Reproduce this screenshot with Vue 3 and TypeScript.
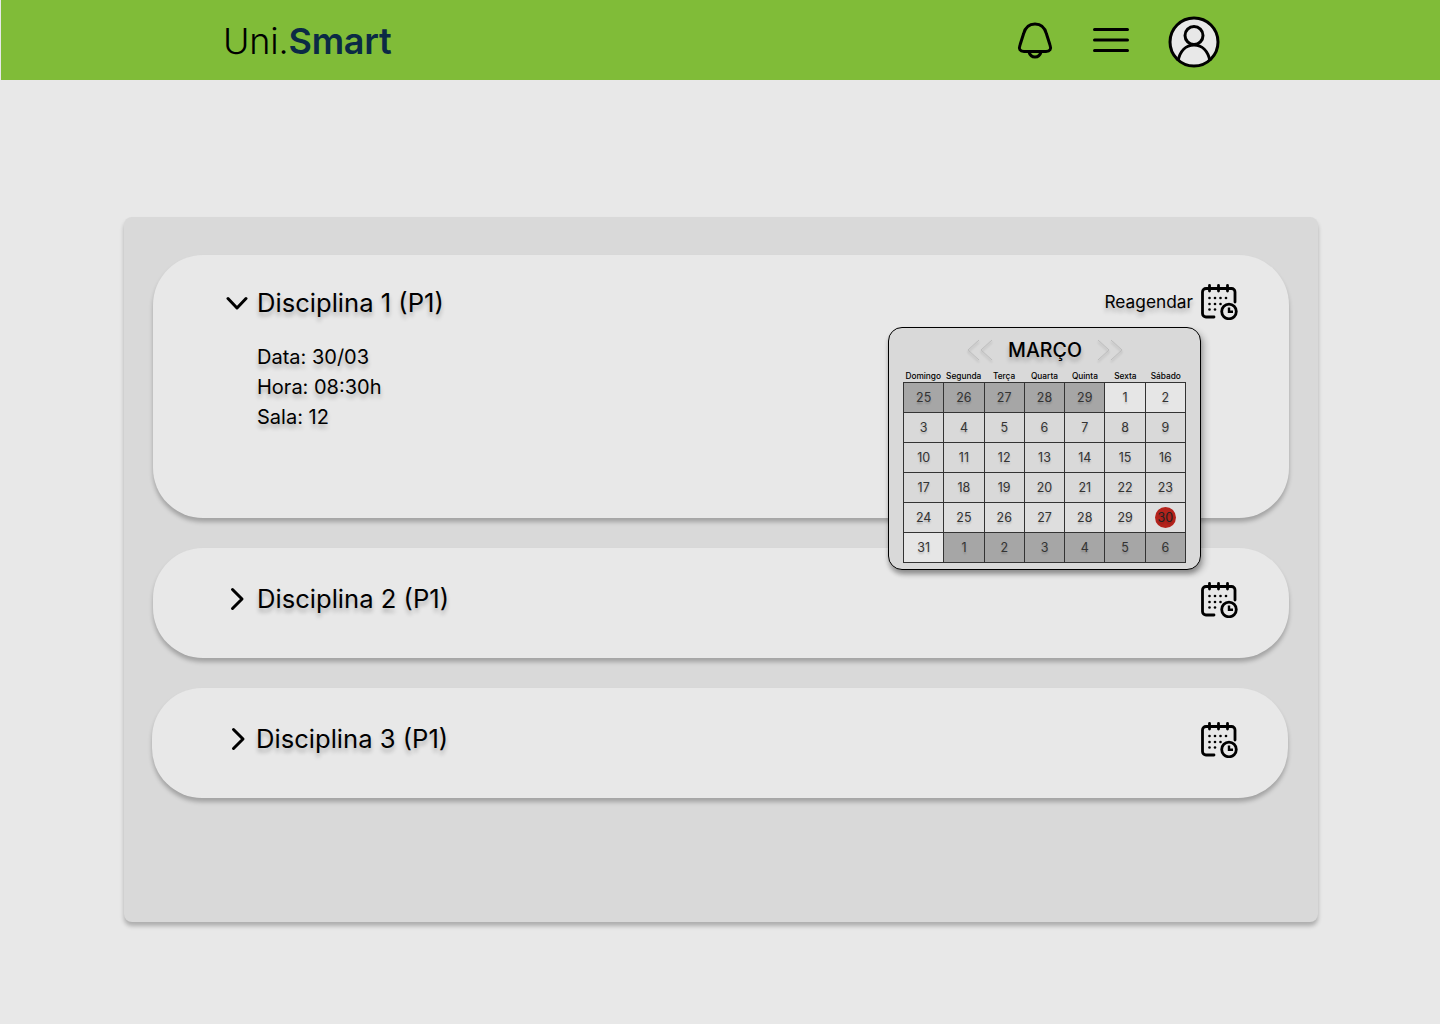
<script setup lang="ts">
interface Cell { d: number; muted?: boolean; light?: boolean; pale?: boolean; today?: boolean }
const weekdays = ['Domingo', 'Segunda', 'Terça', 'Quarta', 'Quinta', 'Sexta', 'Sábado']
const cells: Cell[] = [
  ...[25, 26, 27, 28, 29].map((d) => ({ d, muted: true })),
  { d: 1, pale: true }, { d: 2, pale: true },
  ...Array.from({ length: 21 }, (_, i) => ({ d: i + 3 })),
  ...[24, 25, 26, 27, 28, 29].map((d) => ({ d, light: true })),
  { d: 30, light: true, today: true },
  { d: 31, pale: true },
  ...[1, 2, 3, 4, 5, 6].map((d) => ({ d, muted: true })),
]
const dots = [
  [8.5, 14], [14, 14], [19.5, 14], [25, 14],
  [8.5, 20], [14, 20], [19.5, 20],
  [8.5, 25.5], [14, 25.5],
]
const ticks = [8.5, 17.5, 26.5]
</script>

<template>
  <div class="page">
    <header class="topbar">
      <div class="logo">Uni.<b>Smart</b></div>
      <svg class="bell" width="36" height="38" viewBox="0 0 36 38" fill="none" stroke="#000" stroke-width="3" stroke-linejoin="round" stroke-linecap="round">
        <path d="M18 2C10 2 7.500 8 6.500 12L3 23C1.500 27 3 29.500 7 29.500H29C33 29.500 34.500 27 33 23L29.500 12C28.500 8 26 2 18 2Z" />
        <path d="M12 30C13 33.500 15.500 35 18 35S23 33.500 24 30" />
      </svg>
      <svg class="menu" width="36" height="26" viewBox="0 0 36 26" stroke="#000" stroke-width="3" stroke-linecap="round">
        <path d="M1.5 2.5H34.5M1.5 13H34.5M1.5 23.5H34.5" />
      </svg>
      <svg class="user" width="52" height="52" viewBox="0 0 52 52" fill="none" stroke="#000" stroke-width="3">
        <circle cx="26" cy="26" r="24" fill="#e8e8e8" />
        <circle cx="26" cy="19.5" r="9" />
        <path d="M10 45C12 35 18 29 26 29S40 35 42 45" />
      </svg>
    </header>

    <main class="panel">
      <section class="card open">
        <div class="row">
          <svg class="chev" width="22" height="16" viewBox="0 0 22 16" fill="none" stroke="#000" stroke-width="3" stroke-linecap="round" stroke-linejoin="round">
            <path d="M2 3.5 11 13 20 3.5" />
          </svg>
          <h2>Disciplina 1 (P1)</h2>
          <span class="again">Reagendar</span>
          <svg class="cal" width="37" height="36" viewBox="0 0 37 36" fill="none">
            <path d="M13 33H5A3.500 3.500 0 0 1 1.500 29.500V8A3.500 3.500 0 0 1 5 4.500H30.500A3.500 3.500 0 0 1 34 8V18" stroke="#000" stroke-width="2.800" stroke-linecap="round" />
            <path v-for="t in ticks" :key="t" :d="`M${t} 1.500V7`" stroke="#000" stroke-width="2.800" stroke-linecap="round" />
            <circle v-for="p in dots" :key="p.join()" :cx="p[0]" :cy="p[1]" r="1.300" fill="#000" />
            <circle cx="28" cy="27.500" r="7.300" fill="#e8e8e8" stroke="#000" stroke-width="2.800" />
            <path d="M28 23.500V27.800H32" stroke="#000" stroke-width="2.400" />
          </svg>
        </div>
        <div class="details">
          <p>Data: 30/03</p>
          <p>Hora: 08:30h</p>
          <p>Sala: 12</p>
        </div>

        <div class="calendar">
          <div class="cal-head">
            <svg class="arrow" width="26" height="22" viewBox="0 0 26 22" fill="none" stroke="#bdbdbd" stroke-width="1">
              <path d="M12 1 1 11 12 21M25 1 14 11 25 21" />
            </svg>
            <span class="month">MARÇO</span>
            <svg class="arrow" width="26" height="22" viewBox="0 0 26 22" fill="none" stroke="#bdbdbd" stroke-width="1">
              <path d="M1 1 12 11 1 21M14 1 25 11 14 21" />
            </svg>
          </div>
          <div class="weekdays">
            <span v-for="w in weekdays" :key="w">{{ w }}</span>
          </div>
          <div class="grid">
            <div v-for="(c, i) in cells" :key="i" class="day" :class="{ muted: c.muted, light: c.light, pale: c.pale }">
              <span :class="{ today: c.today }">{{ c.d }}</span>
            </div>
          </div>
        </div>
      </section>

      <section class="card closed">
        <div class="row">
          <svg class="chev right" width="16" height="24" viewBox="0 0 16 24" fill="none" stroke="#000" stroke-width="3" stroke-linecap="round" stroke-linejoin="round">
            <path d="M3.500 2.500 13 12 3.500 21.500" />
          </svg>
          <h2>Disciplina 2 (P1)</h2>
          <svg class="cal push" width="37" height="36" viewBox="0 0 37 36" fill="none">
            <path d="M13 33H5A3.500 3.500 0 0 1 1.500 29.500V8A3.500 3.500 0 0 1 5 4.500H30.500A3.500 3.500 0 0 1 34 8V18" stroke="#000" stroke-width="2.800" stroke-linecap="round" />
            <path v-for="t in ticks" :key="t" :d="`M${t} 1.500V7`" stroke="#000" stroke-width="2.800" stroke-linecap="round" />
            <circle v-for="p in dots" :key="p.join()" :cx="p[0]" :cy="p[1]" r="1.300" fill="#000" />
            <circle cx="28" cy="27.500" r="7.300" fill="#e8e8e8" stroke="#000" stroke-width="2.800" />
            <path d="M28 23.500V27.800H32" stroke="#000" stroke-width="2.400" />
          </svg>
        </div>
      </section>

      <section class="card closed shifted">
        <div class="row">
          <svg class="chev right" width="16" height="24" viewBox="0 0 16 24" fill="none" stroke="#000" stroke-width="3" stroke-linecap="round" stroke-linejoin="round">
            <path d="M3.500 2.500 13 12 3.500 21.500" />
          </svg>
          <h2>Disciplina 3 (P1)</h2>
          <svg class="cal push" width="37" height="36" viewBox="0 0 37 36" fill="none">
            <path d="M13 33H5A3.500 3.500 0 0 1 1.500 29.500V8A3.500 3.500 0 0 1 5 4.500H30.500A3.500 3.500 0 0 1 34 8V18" stroke="#000" stroke-width="2.800" stroke-linecap="round" />
            <path v-for="t in ticks" :key="t" :d="`M${t} 1.500V7`" stroke="#000" stroke-width="2.800" stroke-linecap="round" />
            <circle v-for="p in dots" :key="p.join()" :cx="p[0]" :cy="p[1]" r="1.300" fill="#000" />
            <circle cx="28" cy="27.500" r="7.300" fill="#e8e8e8" stroke="#000" stroke-width="2.800" />
            <path d="M28 23.500V27.800H32" stroke="#000" stroke-width="2.400" />
          </svg>
        </div>
      </section>
    </main>
  </div>
</template>

<style>
html, body { margin: 0; background: #e8e8e8; }
</style>

<style scoped>
.page {
  width: 1440px;
  height: 1024px;
  overflow: hidden;
  background: #e8e8e8;
  font-family: "Inter", "Liberation Sans", sans-serif;
  color: #000;
}
.topbar {
  height: 80px;
  margin-left: 1px;
  background: #80bc38;
  display: flex;
  align-items: center;
  padding-left: 222px;
  box-sizing: border-box;
}
.logo {
  font-family: "Inter", sans-serif;
  font-size: 36px;
  font-weight: 300;
  letter-spacing: -0.2px;
  color: #000;
  margin-right: auto;
  padding-top: 2px;
  line-height: 78px;
}
.logo b { font-weight: 600; color: #0b2a45; }
.bell { margin-right: 40px; margin-top: 2px; }
.menu { margin-right: 39px; }
.user { margin-right: 220px; margin-top: 3px; }

.panel {
  margin: 137px 0 0 124px;
  width: 1194px;
  height: 705px;
  box-sizing: border-box;
  padding: 38px 0 0 29px;
  background: #d9d9d9;
  border-radius: 8px;
  box-shadow: 0 4px 4px rgba(0, 0, 0, 0.25);
  display: flex;
  flex-direction: column;
  gap: 30px;
}
.card {
  position: relative;
  width: 1136px;
  box-sizing: border-box;
  background: #e8e8e8;
  border-radius: 50px;
  box-shadow: 0 4px 4px rgba(0, 0, 0, 0.25);
  padding-right: 51px;
}
.open { height: 263px; padding-top: 29px; }
.closed { height: 110px; padding-top: 34px; }
.shifted { margin-left: -1px; padding-right: 50px; }
.row { display: flex; align-items: center; height: 36px; }
.open .chev { margin-left: 73px; margin-right: 9px; margin-top: 2px; }
.closed .chev { margin-left: 76px; margin-right: 12px; margin-top: -2px; }
.shifted .chev { margin-left: 78px; margin-right: 10px; margin-top: -2px; }
h2 {
  margin: 0;
  font-size: 25.6px;
  font-weight: 400;
  line-height: 36px;
  text-shadow: 0 4px 4px rgba(0, 0, 0, 0.25);
}
.open h2 { margin-top: 2px; }
.closed h2 { margin-top: -2px; }
.again {
  margin-left: auto;
  margin-right: 8px;
  margin-top: -2px;
  font-size: 17.3px;
  text-shadow: 0 4px 4px rgba(0, 0, 0, 0.25);
}
.push { margin-left: auto; }
.cal { display: block; flex: none; }
.details { margin: 22px 0 0 104px; }
.details p {
  margin: 0;
  font-size: 20px;
  line-height: 30px;
  text-shadow: 0 4px 4px rgba(0, 0, 0, 0.25);
}

.calendar {
  position: absolute;
  z-index: 2;
  left: 735px;
  top: 72px;
  width: 313px;
  height: 243px;
  box-sizing: border-box;
  padding: 0 14px;
  background: #d9d9d9;
  border: 1px solid #000;
  border-radius: 14px;
  box-shadow: 0 4px 4px rgba(0, 0, 0, 0.25), 4px 4px 6px rgba(0, 0, 0, 0.2);
}
.cal-head {
  display: flex;
  align-items: center;
  justify-content: center;
  gap: 15px;
  height: 43px;
  margin-right: -1px;
}
.arrow { filter: drop-shadow(0 2px 1px rgba(0, 0, 0, 0.2)); }
.month {
  font-size: 19.6px;
  font-weight: 500;
  text-shadow: 0 4px 4px rgba(0, 0, 0, 0.25);
}
.weekdays {
  display: grid;
  grid-template-columns: repeat(7, 1fr);
  width: 283px;
  height: 11px;
  text-align: center;
  font-size: 8.3px;
  font-weight: 500;
  line-height: 11px;
  white-space: nowrap;
}
.grid {
  display: grid;
  grid-template-columns: repeat(7, 1fr);
  grid-auto-rows: 29px;
  gap: 1px;
  width: 283px;
  box-sizing: border-box;
  border: 1px solid #333;
  background: #333;
}
.day {
  display: flex;
  align-items: center;
  justify-content: center;
  background: #d9d9d9;
  font-size: 12.5px;
  color: #333;
  text-shadow: 0 2px 2px rgba(0, 0, 0, 0.2);
}
.light { background: #dedede; }
.pale { background: #e6e6e6; }
.muted { background: #a6a6a6; }
.today {
  width: 21px;
  height: 21px;
  border-radius: 50%;
  background: #b5231c;
  color: #222;
  display: flex;
  align-items: center;
  justify-content: center;
}
</style>
